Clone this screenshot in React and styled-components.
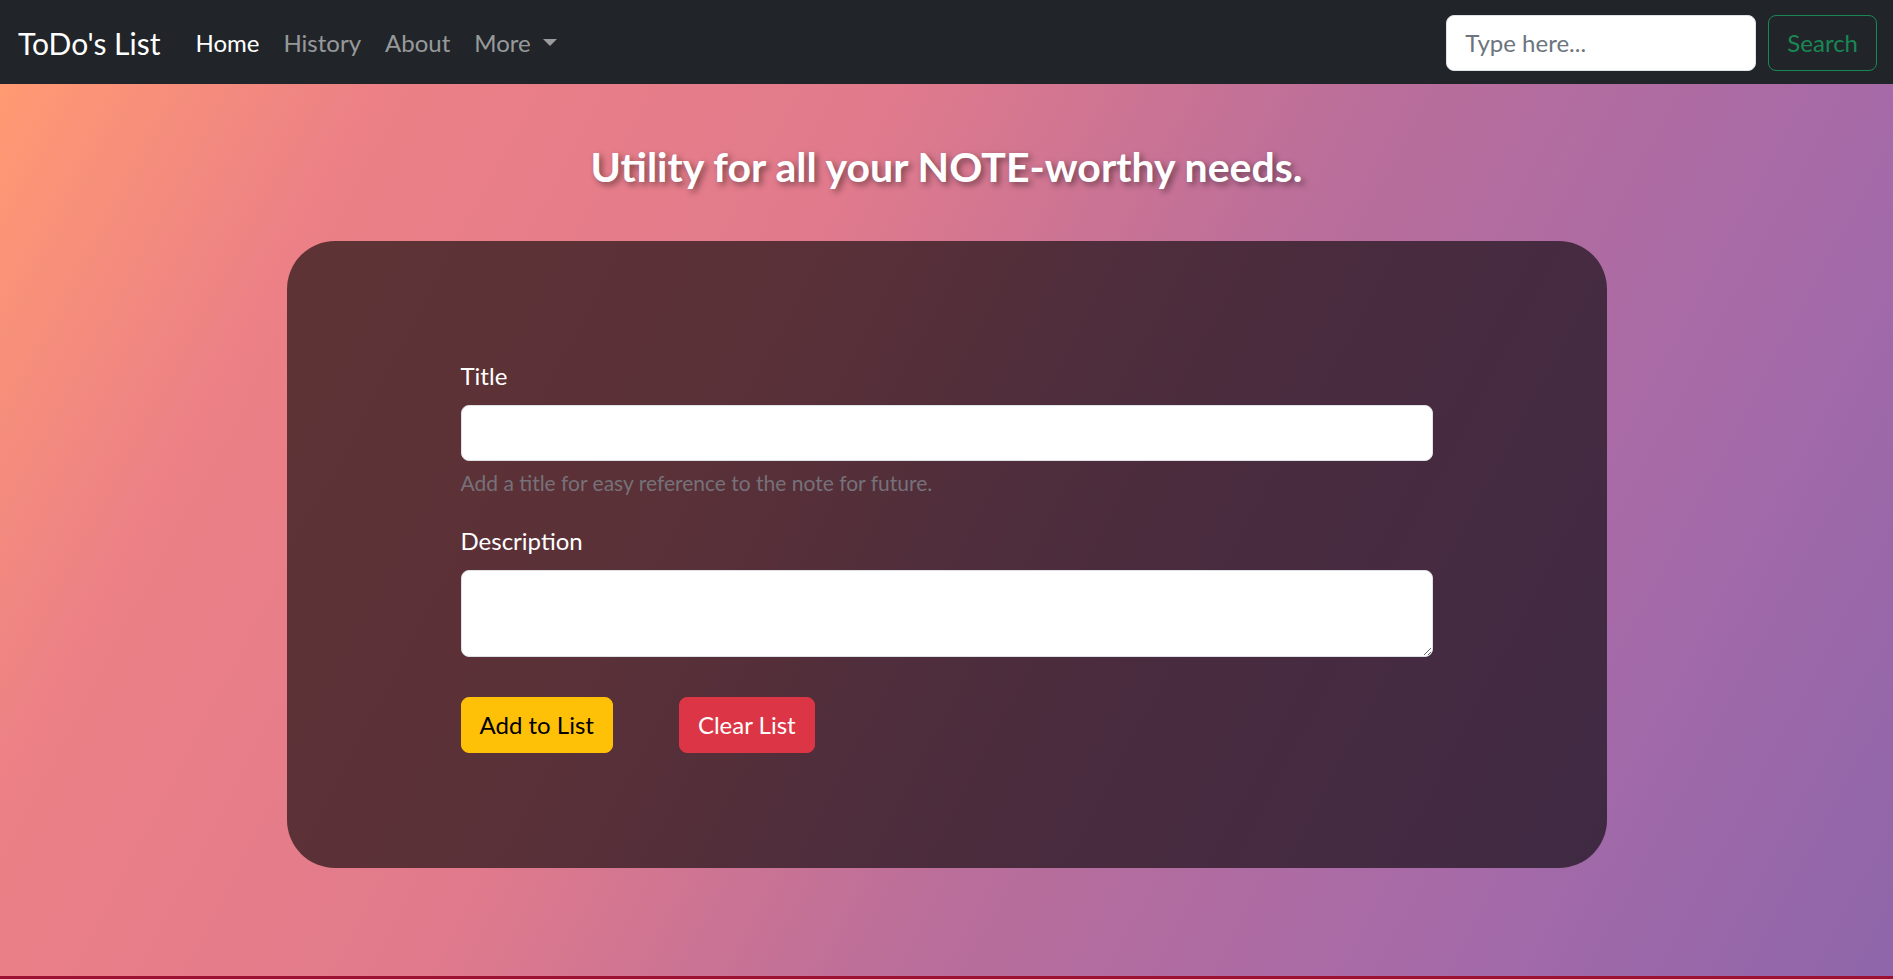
import React from "react";
import styled, { createGlobalStyle } from "styled-components";

const GlobalStyle = createGlobalStyle`
  *, *::before, *::after { box-sizing: border-box; }
  html, body { margin: 0; padding: 0; }
  body {
    font-family: Lato, "Noto Sans", "Liberation Sans", sans-serif;
    color: #212529;
  }
`;

const Page = styled.div`
  display: flex;
  flex-direction: column;
  min-height: 100vh;
`;

const Navbar = styled.nav`
  height: 84px;
  flex: none;
  background: #212529;
  display: flex;
  align-items: center;
  justify-content: space-between;
  padding: 1px 16px 0 18px;
`;

const NavLeft = styled.div`
  display: flex;
  align-items: center;
  padding-top: 1px;
`;

const Brand = styled.a`
  font-size: 30px;
  color: #fff;
  text-decoration: none;
  margin-right: 23px;
  line-height: 1.5;
  white-space: nowrap;
`;

const NavList = styled.ul`
  display: flex;
  align-items: center;
  list-style: none;
  margin: 0;
  padding: 0;
`;

const NavLink = styled.a`
  display: flex;
  align-items: center;
  padding: 12px;
  font-size: 24px;
  line-height: 1.5;
  text-decoration: none;
  color: ${(p) => (p.$active ? "#fff" : "rgba(255,255,255,0.55)")};
  white-space: nowrap;
`;

const Caret = styled.span`
  display: inline-block;
  margin-left: 12px;
  border-top: 7px solid currentColor;
  border-left: 7px solid transparent;
  border-right: 7px solid transparent;
  transform: translateY(-1px);
`;

const SearchForm = styled.form`
  display: flex;
  align-items: center;
  gap: 12px;
`;

const SearchInput = styled.input`
  width: 310px;
  height: 56px;
  padding: 0 18px;
  font-family: inherit;
  font-size: 24px;
  color: #212529;
  background: #fff;
  border: 1.5px solid #dee2e6;
  border-radius: 8px;
  outline: none;
  &::placeholder { color: #6c757d; }
`;

const OutlineButton = styled.button`
  height: 56px;
  padding: 0 18px;
  font-family: inherit;
  font-size: 24px;
  color: #198754;
  background: transparent;
  border: 1.5px solid #198754;
  border-radius: 8px;
  cursor: pointer;
`;

const Main = styled.main`
  flex: 1;
  display: flex;
  flex-direction: column;
  align-items: center;
  padding: 58px 0 40px;
  background: linear-gradient(
    118deg,
    #ff9a72 0%,
    #ec8086 16%,
    #e07a8c 38%,
    #ba6e9a 58%,
    #a66aa8 80%,
    #8e66aa 100%
  );
`;

const Heading = styled.h3`
  margin: 0 0 50px;
  font-size: 41px;
  font-weight: 700;
  line-height: 1.2;
  color: #fff;
  text-shadow: 3px 3px 6px rgba(0, 0, 0, 0.45);
`;

const Card = styled.section`
  width: 1320px;
  background: rgba(0, 0, 0, 0.6);
  border-radius: 48px;
  padding: 117px 174px 115px;
`;

const Field = styled.div`
  margin-bottom: ${(p) => p.$mb || "24px"};
`;

const Label = styled.label`
  display: block;
  margin-bottom: 11px;
  font-size: 24px;
  line-height: 1.5;
  color: #fff;
`;

const TextInput = styled.input`
  display: block;
  width: 100%;
  height: 56px;
  padding: 0 18px;
  font-family: inherit;
  font-size: 24px;
  border: 1.5px solid #dee2e6;
  border-radius: 8px;
  background: #fff;
  outline: none;
`;

const TextArea = styled.textarea`
  display: block;
  width: 100%;
  height: 87px;
  padding: 9px 18px;
  font-family: inherit;
  font-size: 24px;
  border: 1.5px solid #dee2e6;
  border-radius: 8px;
  background: #fff;
  outline: none;
`;

const HelpText = styled.div`
  margin-top: 6px;
  font-size: 21px;
  line-height: 1.5;
  color: #767179;
`;

const ButtonRow = styled.div`
  display: flex;
  gap: 66px;
`;

const ActionButton = styled.button`
  height: 56px;
  padding: 0 18px;
  font-family: inherit;
  font-size: 24px;
  border-radius: 8px;
  border: 1.5px solid ${(p) => p.$bg};
  background: ${(p) => p.$bg};
  color: ${(p) => p.$fg};
  cursor: pointer;
`;

const Footer = styled.footer`
  height: 3px;
  flex: none;
  background: #9c1032;
`;

export default function App() {
  return (
    <Page>
      <GlobalStyle />
      <Navbar>
        <NavLeft>
          <Brand href="#">ToDo's List</Brand>
          <NavList>
            <li><NavLink href="#" $active>Home</NavLink></li>
            <li><NavLink href="#">History</NavLink></li>
            <li><NavLink href="#">About</NavLink></li>
            <li>
              <NavLink href="#">
                More
                <Caret />
              </NavLink>
            </li>
          </NavList>
        </NavLeft>
        <SearchForm onSubmit={(e) => e.preventDefault()}>
          <SearchInput type="search" placeholder="Type here..." />
          <OutlineButton type="submit">Search</OutlineButton>
        </SearchForm>
      </Navbar>
      <Main>
        <Heading>Utility for all your NOTE-worthy needs.</Heading>
        <Card>
          <form onSubmit={(e) => e.preventDefault()}>
            <Field>
              <Label htmlFor="title">Title</Label>
              <TextInput id="title" type="text" />
              <HelpText>Add a title for easy reference to the note for future.</HelpText>
            </Field>
            <Field $mb="40px">
              <Label htmlFor="desc">Description</Label>
              <TextArea id="desc" rows={2} />
            </Field>
            <ButtonRow>
              <ActionButton type="submit" $bg="#ffc107" $fg="#000">Add to List</ActionButton>
              <ActionButton type="button" $bg="#dc3545" $fg="#fff">Clear List</ActionButton>
            </ButtonRow>
          </form>
        </Card>
      </Main>
      <Footer />
    </Page>
  );
}
